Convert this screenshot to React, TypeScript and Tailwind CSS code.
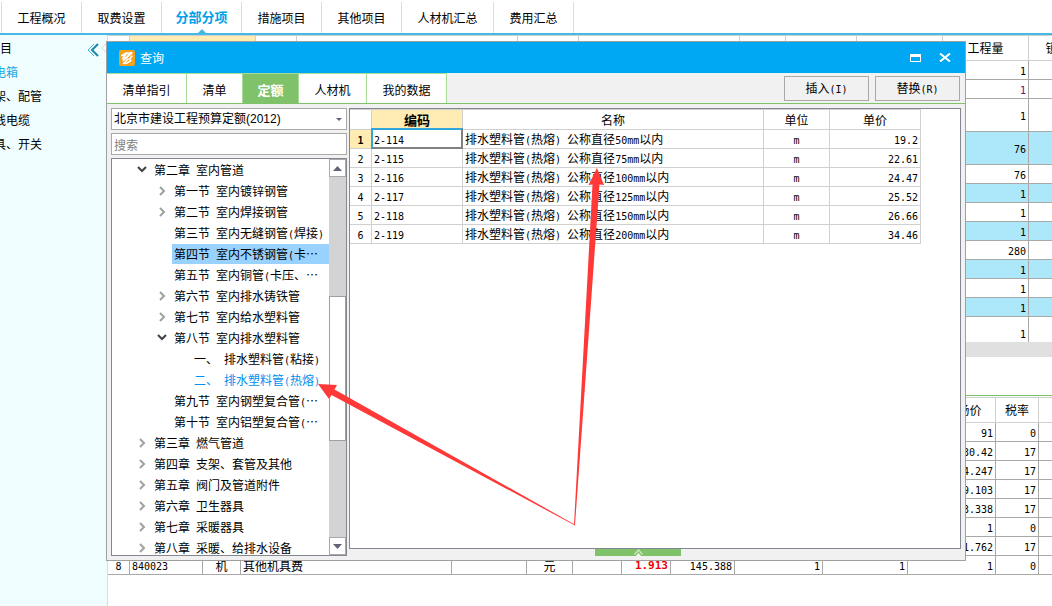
import React from 'react';

type NavTab = { label: string; width: string; active?: boolean };
type TreeNode = { level: 1 | 2 | 3; label: string; state?: 'open' | 'closed'; selected?: boolean; link?: boolean };
type QtyRow = { value: string; height: string; filled?: boolean; purple?: boolean };

const navTabs: NavTab[] = [
  { label: '工程概况', width: 'w-20' },
  { label: '取费设置', width: 'w-20' },
  { label: '分部分项', width: 'w-20', active: true },
  { label: '措施项目', width: 'w-20' },
  { label: '其他项目', width: 'w-20' },
  { label: '人材机汇总', width: 'w-[92px]' },
  { label: '费用汇总', width: 'w-20' },
];

const dialogTabs: NavTab[] = [
  { label: '清单指引', width: 'w-20' },
  { label: '清单', width: 'w-14' },
  { label: '定额', width: 'w-14', active: true },
  { label: '人材机', width: 'w-[68px]' },
  { label: '我的数据', width: 'w-20' },
];

const treeNodes: TreeNode[] = [
  { level: 1, label: '第二章 室内管道', state: 'open' },
  { level: 2, label: '第一节 室内镀锌钢管', state: 'closed' },
  { level: 2, label: '第二节 室内焊接钢管', state: 'closed' },
  { level: 2, label: '第三节 室内无缝钢管(焊接)' },
  { level: 2, label: '第四节 室内不锈钢管(卡…', selected: true },
  { level: 2, label: '第五节 室内铜管(卡压、…' },
  { level: 2, label: '第六节 室内排水铸铁管', state: 'closed' },
  { level: 2, label: '第七节 室内给水塑料管', state: 'closed' },
  { level: 2, label: '第八节 室内排水塑料管', state: 'open' },
  { level: 3, label: '一、 排水塑料管(粘接)' },
  { level: 3, label: '二、 排水塑料管(热熔)', link: true },
  { level: 2, label: '第九节 室内钢塑复合管(…' },
  { level: 2, label: '第十节 室内铝塑复合管(…' },
  { level: 1, label: '第三章 燃气管道', state: 'closed' },
  { level: 1, label: '第四章 支架、套管及其他', state: 'closed' },
  { level: 1, label: '第五章 阀门及管道附件', state: 'closed' },
  { level: 1, label: '第六章 卫生器具', state: 'closed' },
  { level: 1, label: '第七章 采暖器具', state: 'closed' },
  { level: 1, label: '第八章 采暖、给排水设备', state: 'closed' },
];

const indents = { 1: 'pl-5', 2: 'pl-10', 3: 'pl-[60px]' };

const quotaRows = [
  ['2-114', '排水塑料管(热熔) 公称直径50mm以内', '19.2'],
  ['2-115', '排水塑料管(热熔) 公称直径75mm以内', '22.61'],
  ['2-116', '排水塑料管(热熔) 公称直径100mm以内', '24.47'],
  ['2-117', '排水塑料管(热熔) 公称直径125mm以内', '25.52'],
  ['2-118', '排水塑料管(热熔) 公称直径150mm以内', '26.66'],
  ['2-119', '排水塑料管(热熔) 公称直径200mm以内', '34.46'],
];

const qtyCols = [22, 126, 41, 221, 61, 161, 46, 71, 86, 86, 58];
const qtyRows: QtyRow[] = [
  { value: '1', height: 'h-[19px]' },
  { value: '1', height: 'h-[19px]', purple: true },
  { value: '1', height: 'h-[33px]' },
  { value: '76', height: 'h-[33px]', filled: true },
  { value: '76', height: 'h-[19px]' },
  { value: '1', height: 'h-[19px]', filled: true },
  { value: '1', height: 'h-[19px]' },
  { value: '1', height: 'h-[19px]', filled: true },
  { value: '280', height: 'h-[19px]' },
  { value: '1', height: 'h-[19px]', filled: true },
  { value: '1', height: 'h-[19px]' },
  { value: '1', height: 'h-[19px]', filled: true },
];

const priceCols = [22, 73, 38, 211, 75, 46, 49, 49, 64, 88, 85, 88, 43, 60];
const priceRows = [
  ['91', '0'],
  ['430.42', '17'],
  ['4.247', '17'],
  ['9.103', '17'],
  ['3.338', '17'],
  ['1', '0'],
  ['1.762', '17'],
];

// Half-width characters take half of the 12px cell used by the full-width ones.
function Mixed({ text }: { text: string }) {
  return (
    <>
      {text.split(/([\x20-\x7e]+)/).map((part, i) => (i % 2 ? (
        <span key={i} className="whitespace-pre font-['DejaVu_Sans_Mono',monospace] text-[10px]">{part}</span>
      ) : part))}
    </>
  );
}

function Cols({ widths }: { widths: number[] }) {
  return (
    <colgroup>
      {widths.map((width, i) => <col key={i} style={{ width }} />)}
    </colgroup>
  );
}

function Chevron({ open }: { open: boolean }) {
  return open ? (
    <svg width="10" height="10" viewBox="0 0 10 10" fill="none" stroke="#404040" strokeWidth="2"><path d="M1 2l4 4 4-4" /></svg>
  ) : (
    <svg width="10" height="10" viewBox="0 0 10 10" fill="none" stroke="#a0a0a0" strokeWidth="2"><path d="M3 1l4 4-4 4" /></svg>
  );
}

function TopNav() {
  return (
    <nav className="flex h-[35px] shrink-0 border-b-2 border-[#45b8e6] pt-[2px]">
      <div className="flex border-l border-[#dcdcdc] ml-px">
        {navTabs.map((tab) => (
          <a
            key={tab.label}
            href="#"
            className={`relative flex items-center justify-center border-r border-[#dcdcdc] ${tab.width} ${tab.active ? 'pb-[2px] text-[13px] font-bold text-[#00a2e8]' : ''}`}
          >
            {tab.label}
            {tab.active && (
              <svg className="absolute bottom-0 left-9" width="8" height="4" viewBox="0 0 8 4"><path d="M0 4l4-4 4 4z" fill="#45b8e6" /></svg>
            )}
          </a>
        ))}
      </div>
    </nav>
  );
}

function Sidebar() {
  return (
    <aside className="w-[107px] shrink-0 overflow-hidden bg-[#f0fdff] leading-6">
      <div className="flex items-center">
        <span className="mt-px">目</span>
        <svg className="ml-auto mt-1" width="12" height="14" viewBox="0 0 12 14" fill="none">
          <path d="M7 1L1 7l6 6" stroke="#45b8d8" />
          <path d="M11 1L5 7l6 6" stroke="#1888a8" strokeWidth="2" />
        </svg>
        <svg className="ml-[2px]" width="6" height="10" viewBox="0 0 6 10"><path d="M5.500 0.500L0.500 5l5 4.500z" fill="#fafafa" stroke="#d8d8d8" /></svg>
      </div>
      <ul className="-ml-[6px]">
        <li className="text-[#1ba7e0]">电箱</li>
        <li>架、配管</li>
        <li>线电缆</li>
        <li>具、开关</li>
      </ul>
    </aside>
  );
}

function QuantityTable() {
  const line = 'border-r border-b border-[#a9a9a9]';
  return (
    <table className="w-max table-fixed border-separate border-spacing-0">
      <Cols widths={qtyCols} />
      <thead>
        <tr className="h-[26px]">
          {qtyCols.map((_, i) => (
            <th key={i} className={`border-y border-r border-[#d0d0d0] p-0 font-normal ${i === 1 ? 'bg-[#ffecb3]' : ''}`}>
              {i === 9 && '工程量'}
              {i === 10 && '锁定'}
            </th>
          ))}
        </tr>
      </thead>
      <tbody>
        {qtyRows.map((row, r) => (
          <tr key={r} className={`${row.height} ${row.filled ? 'bg-[#ade8fa]' : ''}`}>
            {qtyCols.map((_, i) => (
              <td key={i} className={`${line} p-0 pr-[2px] pt-px text-right leading-[14px] ${row.purple ? 'text-[#800080]' : ''}`}>
                {i === 9 && <Mixed text={row.value} />}
              </td>
            ))}
          </tr>
        ))}
        <tr className="h-[25px]">
          {qtyCols.map((_, i) => (
            <td key={i} className="border-r border-[#a9a9a9] p-0 pr-[2px] pt-2 text-right leading-[14px]">
              {i === 9 && <Mixed text="1" />}
            </td>
          ))}
        </tr>
      </tbody>
    </table>
  );
}

function PriceTable() {
  const cell = 'border-r border-b border-[#a9a9a9] p-0 px-[2px] pt-[2px] leading-[14px]';
  return (
    <table className="w-max table-fixed border-separate border-spacing-0">
      <Cols widths={priceCols} />
      <thead>
        <tr className="h-[26px]">
          {priceCols.map((_, i) => (
            <th key={i} className="border-y border-r border-[#d0d0d0] p-0 font-normal">
              {i === 11 && '含税市场价'}
              {i === 12 && '税率'}
            </th>
          ))}
        </tr>
      </thead>
      <tbody>
        {priceRows.map(([price, rate], r) => (
          <tr key={r} className="h-[19px]">
            {priceCols.map((_, i) => (
              <td key={i} className={`${cell} text-right`}>
                {i === 11 && <Mixed text={price} />}
                {i === 12 && <Mixed text={rate} />}
              </td>
            ))}
          </tr>
        ))}
        <tr className="h-[19px]">
          <td className={`${cell} text-center`}><Mixed text="8" /></td>
          <td className={cell}><Mixed text="840023" /></td>
          <td className={`${cell} text-center`}>机</td>
          <td className={cell}>其他机具费</td>
          <td className={cell} />
          <td className={`${cell} text-center`}>元</td>
          <td className={cell} />
          <td className={`${cell} text-right font-['DejaVu_Sans_Mono',monospace] text-[11px] font-bold text-[#f00000]`}>1.913</td>
          <td className={`${cell} text-right`}><Mixed text="145.388" /></td>
          <td className={`${cell} text-right`}><Mixed text="1" /></td>
          <td className={`${cell} text-right`}><Mixed text="1" /></td>
          <td className={`${cell} text-right`}><Mixed text="1" /></td>
          <td className={`${cell} text-right`}><Mixed text="0" /></td>
          <td className={cell} />
        </tr>
      </tbody>
    </table>
  );
}

function TitleBar() {
  return (
    <header className="flex h-[31px] items-center bg-[#00a8f3] pl-3 pr-[14px] text-white">
      <svg width="16" height="16" viewBox="0 0 16 16">
        <rect width="16" height="16" rx="2" fill="#f7a11b" />
        <g fill="none" stroke="#fff" strokeLinecap="round" strokeLinejoin="round">
          <path d="M3 5.500L7.500 3 4 8.500" strokeWidth="2" />
          <path d="M9 3.500l3.500-.5L4.500 10" strokeWidth="2" />
          <path d="M13 6l-2.500 3L12 10.500 8 13l-3.500.5L9 9" strokeWidth="1.600" />
        </g>
      </svg>
      <h2 className="ml-[5px]">查询</h2>
      <button type="button" aria-label="最大化" className="ml-auto">
        <svg width="11" height="8" viewBox="0 0 11 8"><path d="M0 0h11v8H0zM1 3v4h9V3z" fill="#fff" fillRule="evenodd" /></svg>
      </button>
      <button type="button" aria-label="关闭" className="ml-[18px]">
        <svg width="12" height="9" viewBox="0 0 12 9"><path d="M1 0.500l10 8M11 0.500l-10 8" stroke="#fff" strokeWidth="2" /></svg>
      </button>
    </header>
  );
}

function DialogTabs() {
  return (
    <div className="flex h-[31px] justify-between border-b border-[#80c269]">
      <div className="flex">
        {dialogTabs.map((tab) => (
          <button
            key={tab.label}
            type="button"
            className={`border-r border-t border-[#a8dc96] pt-[3px] ${tab.width} ${tab.active ? 'bg-[#80c269] text-[13px] font-bold text-white' : 'bg-white'}`}
          >
            {tab.label}
          </button>
        ))}
      </div>
      <div className="flex gap-[6px] pr-[5px] pt-[3px]">
        <button type="button" className="h-[25px] w-[85px] border border-[#a9a9a9] bg-[#f1f1f1]"><Mixed text="插入(I)" /></button>
        <button type="button" className="h-[25px] w-[85px] border border-[#a9a9a9] bg-[#f1f1f1]"><Mixed text="替换(R)" /></button>
      </div>
    </div>
  );
}

function ChapterTree() {
  return (
    <div className="flex h-[398px] overflow-hidden border border-[#828790] bg-white">
      <ul className="min-w-0 flex-1">
        {treeNodes.map((node) => (
          <li key={node.label} className={`flex h-[21px] items-center whitespace-nowrap ${indents[node.level]}`}>
            <span className="flex w-5 shrink-0 justify-center">
              {node.state && <Chevron open={node.state === 'open'} />}
            </span>
            <span className={`h-5 flex-1 pl-[2px] leading-5 ${node.selected ? 'bg-[#99d1ff]' : ''} ${node.link ? 'text-[#0090f0]' : ''}`}>
              <Mixed text={node.label} />
            </span>
          </li>
        ))}
      </ul>
      <div className="flex w-[17px] flex-col bg-[#d3d3d3]">
        <button type="button" aria-label="向上" className="flex h-[18px] items-center justify-center border border-[#a9a9a9] bg-white">
          <svg width="9" height="5" viewBox="0 0 9 5"><path d="M0 5l4.500-5L9 5z" fill="#606478" /></svg>
        </button>
        <div className="mt-[119px] h-[145px] border border-[#a0a0a0] bg-white" />
        <button type="button" aria-label="向下" className="mt-auto flex h-[18px] items-center justify-center border border-[#a9a9a9] bg-white">
          <svg width="9" height="5" viewBox="0 0 9 5"><path d="M0 0l4.500 5L9 0z" fill="#606478" /></svg>
        </button>
      </div>
    </div>
  );
}

function QuotaTable() {
  const cell = 'border-r border-b border-[#d0d0d0] p-0 px-[2px] leading-4';
  const body = 'border-r border-b border-[#d0d0d0] p-0 px-[2px] pt-[2px] leading-[14px]';
  return (
    <table className="w-max table-fixed border-separate border-spacing-0">
      <Cols widths={[22, 91, 301, 66, 91]} />
      <thead>
        <tr className="h-[21px]">
          <th className={`${cell} border-t`} />
          <th className={`${cell} border-t bg-[#ffecb3] text-[13px] font-bold`}>编码</th>
          <th className={`${cell} border-t font-normal`}>名称</th>
          <th className={`${cell} border-t font-normal`}>单位</th>
          <th className={`${cell} border-t font-normal`}>单价</th>
        </tr>
      </thead>
      <tbody>
        {quotaRows.map(([code, name, price], i) => (
          <tr key={code} className="h-[19px]">
            <td className={`${body} text-center ${i === 0 ? 'bg-[#ffecb3] font-bold' : ''}`}><Mixed text={`${i + 1}`} /></td>
            <td className={`${body} relative`}>
              <Mixed text={code} />
              {i === 0 && (
                <span className="absolute -left-px -right-px -top-[2px] -bottom-px border-2 border-b-[#808080] border-l-[#30a5dc] border-r-[#808080] border-t-[#30a5dc]" />
              )}
            </td>
            <td className={body}><Mixed text={name} /></td>
            <td className={`${body} text-center`}><Mixed text="m" /></td>
            <td className={`${body} text-right`}><Mixed text={price} /></td>
          </tr>
        ))}
      </tbody>
    </table>
  );
}

function QueryDialog() {
  return (
    <section className="absolute left-[106px] right-[86px] top-[41px] border border-[#a0a0a0] bg-[#f1f1f1]">
      <TitleBar />
      <DialogTabs />
      <div className="flex gap-[2px] px-1 pb-1 pt-1">
        <div className="flex w-[236px] shrink-0 flex-col gap-[3px]">
          <div className="relative">
            <select aria-label="定额库" className="block h-[22px] w-full appearance-none border border-[#a9a9a9] bg-white pl-[2px] font-['Liberation_Sans','Noto_Sans_CJK_SC',sans-serif]">
              <option>北京市建设工程预算定额(2012)</option>
            </select>
            <svg className="pointer-events-none absolute right-[5px] top-[10px]" width="6" height="3" viewBox="0 0 6 3"><path d="M0 0h6L3 3z" fill="#606478" /></svg>
          </div>
          <input aria-label="搜索" placeholder="搜索" className="h-[22px] w-full border border-[#a9a9a9] bg-white px-[2px] placeholder:text-[#808080]" />
          <ChapterTree />
        </div>
        <div className="min-w-0 flex-1">
          <div className="h-[441px] overflow-hidden border border-[#828790] bg-white">
            <QuotaTable />
          </div>
          <button type="button" aria-label="展开" className="ml-[246px] flex h-[7px] w-[86px] items-center justify-center bg-[#80c269]">
            <svg width="9" height="7" viewBox="0 0 9 7">
              <path d="M0.500 5.500l4-4.500 4 4.500" fill="none" stroke="#c8e6bc" strokeWidth="1.500" />
              <path d="M2 7l2.500-3L7 7z" fill="#fff" />
            </svg>
          </button>
        </div>
      </div>
    </section>
  );
}

function Arrows() {
  return (
    <svg className="pointer-events-none absolute left-0 top-0" width="1052" height="606" viewBox="0 0 1052 606" fill="#ff3838">
      <path d="M597 168l7 17-4.500-.5L575 525h-1L592.500 184.500l-4 .5z" />
      <path d="M318 384l19 1-2.500 4.500L575.500 525l-.5.5L331.500 395l-2.500 4z" />
    </svg>
  );
}

function App() {
  return (
    <main lang="zh-CN" className="relative flex min-h-screen flex-col overflow-hidden bg-white font-['Noto_Sans_CJK_SC',sans-serif] text-xs text-black">
      <TopNav />
      <div className="flex flex-1">
        <Sidebar />
        <div className="w-0 flex-1 overflow-hidden border-l border-[#dcdcdc]">
          <QuantityTable />
          <div className="h-[15px] bg-[#e0e0e0]" />
          <div className="mt-[38px] border-t border-[#80c269] pt-px">
            <PriceTable />
          </div>
        </div>
      </div>
      <QueryDialog />
      <Arrows />
    </main>
  );
}

export default App;
